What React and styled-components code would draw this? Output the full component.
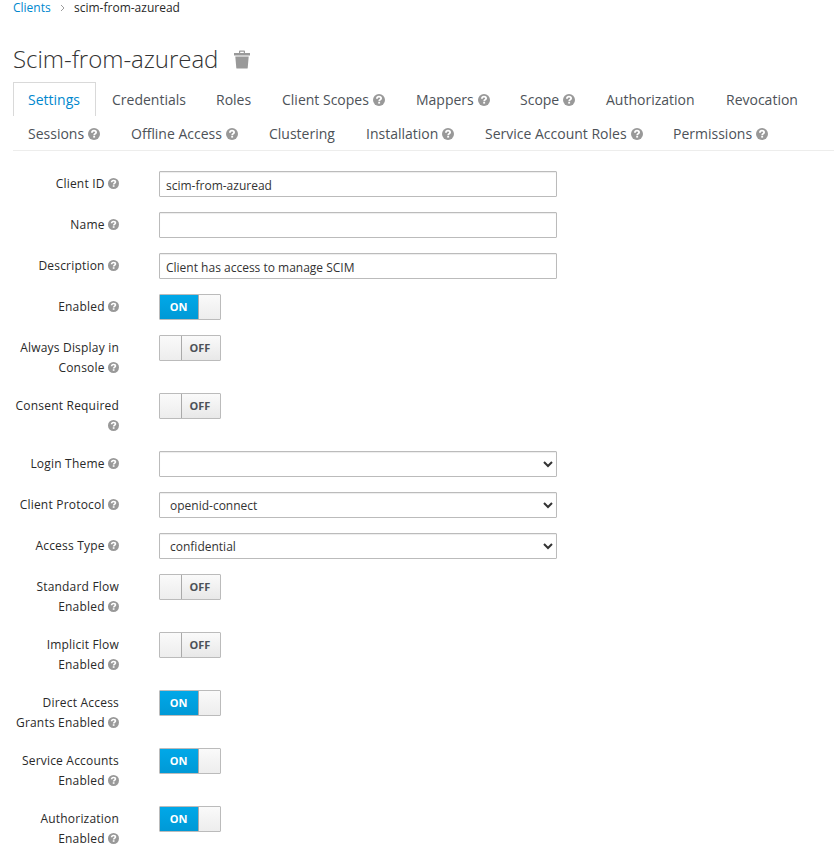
import React from "react";
import styled, { createGlobalStyle, css } from "styled-components";

const GlobalStyle = createGlobalStyle`
  *, *::before, *::after { box-sizing: border-box; }
  body {
    margin: 0;
    overflow: hidden;
    background: #fff;
    color: #333;
    font-family: "Open Sans", "Noto Sans", sans-serif;
    font-size: 12px;
    line-height: 20px;
  }
`;

const Page = styled.main`
  height: 861px;
  padding-left: 13px;
  overflow: hidden;
`;

const Breadcrumb = styled.nav`
  display: flex;
  align-items: center;
  height: 16px;
  white-space: nowrap;
`;

const Crumb = styled.a`
  color: #0088ce;
  width: 38px;
`;

const CurrentCrumb = styled.span`
  color: #292929;
`;

const Chevron = styled.svg`
  width: 5px;
  height: 8px;
  margin: 0 9px;
  fill: none;
  stroke: #9c9c9c;
`;

const TitleRow = styled.header`
  display: flex;
  align-items: center;
  height: 66px;
  padding-top: 20px;
`;

const Title = styled.h1`
  margin: 0;
  width: 221px;
  font-size: 24px;
  font-weight: 300;
  line-height: 26px;
  white-space: nowrap;
  letter-spacing: -0.03px;
`;

const Trash = styled.svg`
  width: 17px;
  height: 19px;
  fill: #999;
`;

const Tabs = styled.ul`
  display: flex;
  flex-wrap: wrap;
  margin: 0;
  padding: 0;
  height: 69px;
  list-style: none;
  border-bottom: 1px solid #ededec;
`;

const Tab = styled.li`
  display: flex;
  align-items: center;
  flex: none;
  gap: 4px;
  width: ${(p) => p.$width}px;
  height: 34px;
  padding: 1px 0 0 15px;
  font-size: 14px;
  color: #4d5258;
  white-space: nowrap;
  ${(p) =>
    p.$active &&
    css`
      width: 83px;
      margin-right: 1px;
      padding: 0 0 0 14px;
      color: #0088ce;
      border: 1px solid #d9d9d9;
      border-bottom: 0;
    `}
`;

const HelpSvg = styled.svg`
  flex: none;
  display: inline-block;
  width: ${(p) => p.$size}px;
  height: ${(p) => p.$size}px;
  vertical-align: -1px;
  fill: #999;
`;

const Form = styled.form`
  display: flex;
  flex-direction: column;
  gap: 15px;
  margin-top: 20px;
`;

const Row = styled.div`
  display: grid;
  grid-template-columns: 106px 398px;
  column-gap: 40px;
  min-height: 26px;
  align-items: start;
`;

const Label = styled.label`
  padding-top: 3px;
  font-weight: 500;
  letter-spacing: 0.2px;
  text-align: right;
  color: #292929;
  white-space: nowrap;
`;

const field = css`
  width: 398px;
  height: 26px;
  margin: 0;
  border: 1px solid #bbb;
  border-radius: 1px;
  outline: none;
  background-color: #fff;
  color: #333;
  font: 12px "Open Sans", "Noto Sans", sans-serif;
  box-shadow: inset 0 1px 1px rgba(3, 3, 3, 0.075);
`;

const TextInput = styled.input`
  ${field}
  padding: 4px 6px 2px;
`;

const Select = styled.select`
  ${field}
  padding: 3px 6px 2px;
`;

const Switch = styled.div`
  display: flex;
  width: 62px;
  height: 26px;
  border: 1px solid #bbb;
  border-radius: 1px;
  overflow: hidden;
`;

const SwitchText = styled.span`
  flex: 1;
  padding-right: ${(p) => (p.$on ? 1 : 2)}px;
  text-align: center;
  font-size: 11px;
  font-weight: 700;
  line-height: 24px;
  color: ${(p) => (p.$on ? "#fff" : "#4d5258")};
  background: ${(p) =>
    p.$on ? "linear-gradient(#00a8e8, #0099d6)" : "linear-gradient(#fafafa, #e8e8e8)"};
`;

const Handle = styled.span`
  width: 22px;
  background: linear-gradient(#fafafa, #ededed);
  border: 0 solid #aaa;
  border-left-width: ${(p) => (p.$on ? 1 : 0)}px;
  border-right-width: ${(p) => (p.$on ? 0 : 1)}px;
`;

function Help({ size = 11 }) {
  return (
    <HelpSvg $size={size} viewBox="0 0 12 12" aria-hidden="true">
      <circle cx="6" cy="6" r="6" />
      <path
        d="M3.9 4.7C4 3.3 4.8 2.7 6 2.7C7.3 2.7 8.1 3.4 8.1 4.4C8.1 5.7 6.2 5.6 6.2 7.2"
        fill="none"
        stroke="#fff"
        strokeWidth="1.8"
      />
      <rect x="5.2" y="7.9" width="1.9" height="1.7" fill="#fff" />
    </HelpSvg>
  );
}

function Toggle({ on }) {
  return (
    <Switch role="switch" aria-checked={on}>
      {!on && <Handle />}
      <SwitchText $on={on}>{on ? "ON" : "OFF"}</SwitchText>
      {on && <Handle $on />}
    </Switch>
  );
}

const tabs = [
  { name: "Settings", active: true, width: 84 },
  { name: "Credentials", width: 104 },
  { name: "Roles", width: 66 },
  { name: "Client Scopes", width: 134, help: true },
  { name: "Mappers", width: 104, help: true },
  { name: "Scope", width: 86, help: true },
  { name: "Authorization", width: 120 },
  { name: "Revocation", width: 103 },
  { name: "Sessions", width: 103, help: true },
  { name: "Offline Access", width: 138, help: true },
  { name: "Clustering", width: 97 },
  { name: "Installation", width: 119, help: true },
  { name: "Service Account Roles", width: 188, help: true },
  { name: "Permissions", width: 126, help: true },
];

const fields = [
  { lines: ["Client ID"], type: "text", value: "scim-from-azuread" },
  { lines: ["Name"], type: "text", value: "" },
  { lines: ["Description"], type: "text", value: "Client has access to manage SCIM" },
  { lines: ["Enabled"], type: "switch", on: true },
  { lines: ["Always Display in", "Console"], type: "switch", on: false },
  { lines: ["Consent Required", ""], type: "switch", on: false },
  { lines: ["Login Theme"], type: "select", value: "" },
  { lines: ["Client Protocol"], type: "select", value: "openid-connect" },
  { lines: ["Access Type"], type: "select", value: "confidential" },
  { lines: ["Standard Flow", "Enabled"], type: "switch", on: false },
  { lines: ["Implicit Flow", "Enabled"], type: "switch", on: false },
  { lines: ["Direct Access", "Grants Enabled"], type: "switch", on: true },
  { lines: ["Service Accounts", "Enabled"], type: "switch", on: true },
  { lines: ["Authorization", "Enabled"], type: "switch", on: true },
];

function Control({ field: f }) {
  if (f.type === "switch") return <Toggle on={f.on} />;
  if (f.type === "select") {
    return (
      <Select defaultValue={f.value}>
        <option value={f.value}>{f.value}</option>
      </Select>
    );
  }
  return <TextInput type="text" defaultValue={f.value} />;
}

export default function App() {
  return (
    <Page>
      <GlobalStyle />
      <Breadcrumb>
        <Crumb>Clients</Crumb>
        <Chevron viewBox="0 0 5 8">
          <path d="M1 1l3 3-3 3" />
        </Chevron>
        <CurrentCrumb>scim-from-azuread</CurrentCrumb>
      </Breadcrumb>
      <TitleRow>
        <Title>Scim-from-azuread</Title>
        <Trash viewBox="0 0 17 19">
          <path d="M0 3h5V1.2Q5 .5 5.8 .5h4.4Q11 .5 11 1.2V3h5v2.5H0zM6.2 1.7V3h3.6V1.7zM1.3 6.5h13.4l-1 11.5q-.1.5-.7.5H3q-.6 0-.7-.5z" fillRule="evenodd" />
        </Trash>
      </TitleRow>
      <Tabs>
        {tabs.map((t) => (
          <Tab key={t.name} $active={t.active} $width={t.width}>
            {t.name}
            {t.help && <Help size={12} />}
          </Tab>
        ))}
      </Tabs>
      <Form>
        {fields.map((f) => (
          <Row key={f.lines.join(" ")}>
            <Label>
              {f.lines.map((line, i) => (
                <React.Fragment key={i}>
                  {i > 0 && <br />}
                  {line}
                </React.Fragment>
              ))}{" "}
              <Help />
            </Label>
            <Control field={f} />
          </Row>
        ))}
      </Form>
    </Page>
  );
}
